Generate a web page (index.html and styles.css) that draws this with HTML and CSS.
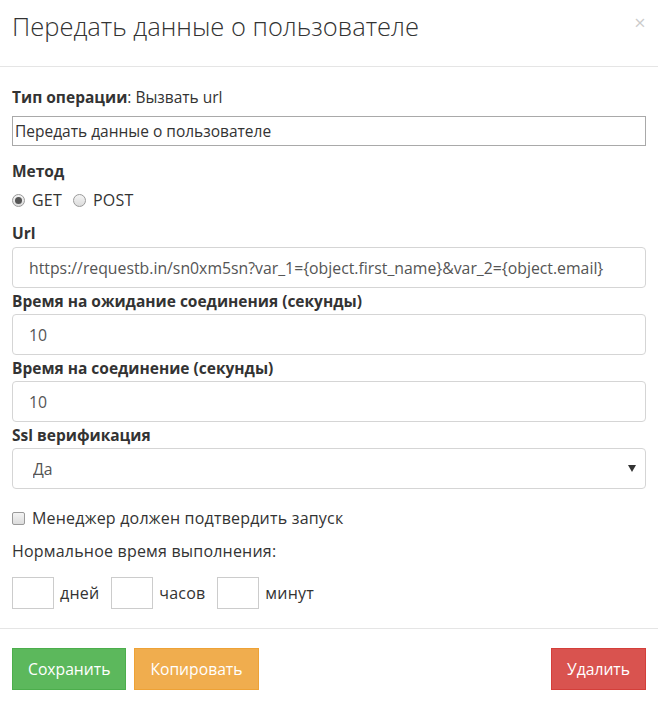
FILE: index.html
```html
<!DOCTYPE html>
<html lang="ru">

<head>
  <meta charset="UTF-8">
  <meta name="viewport" content="width=device-width, initial-scale=1.0">
  <title>Передать данные о пользователе</title>
  <link rel="stylesheet" href="styles.css">
</head>

<body>
  <div class="modal">
    <div class="modal-header">
      <h4 class="modal-title">Передать данные о пользователе</h4>
      <span class="close">&times;</span>
    </div>

    <div class="modal-body">
      <div class="op-type"><b>Тип операции</b>: Вызвать url</div>
      <input type="text" class="plain-input" value="Передать данные о пользователе">

      <div class="label label-method">Метод</div>
      <div class="radios">
        <label><input type="radio" name="method" checked> GET</label>
        <label><input type="radio" name="method"> POST</label>
      </div>

      <div class="label label-url">Url</div>
      <input type="text" class="form-control" value="https://requestb.in/sn0xm5sn?var_1={object.first_name}&var_2={object.email}">

      <div class="label">Время на ожидание соединения (секунды)</div>
      <input type="text" class="form-control" value="10">

      <div class="label">Время на соединение (секунды)</div>
      <input type="text" class="form-control" value="10">

      <div class="label">Ssl верификация</div>
      <div class="select-wrap">
        <select class="form-control">
          <option>Да</option>
          <option>Нет</option>
        </select>
      </div>

      <label class="check"><input type="checkbox"> Менеджер должен подтвердить запуск</label>

      <div class="normal-time">Нормальное время выполнения:</div>
      <div class="duration">
        <input type="text" class="small-input"><span>дней</span>
        <input type="text" class="small-input"><span>часов</span>
        <input type="text" class="small-input"><span>минут</span>
      </div>
    </div>

    <div class="modal-footer">
      <div class="btn btn-success">Сохранить</div>
      <div class="btn btn-warning">Копировать</div>
      <div class="btn btn-danger btn-right">Удалить</div>
    </div>
  </div>
</body>

</html>
```

FILE: styles.css
```css
* {
  margin: 0;
  padding: 0;
  box-sizing: border-box;
}

body {
  font-family: "Open Sans", sans-serif;
  font-size: 16px;
  letter-spacing: 0.2px;
  color: #333;
  background: #fff;
}

.modal {
  width: 658px;
}

.modal-header {
  height: 67px;
  padding: 8px 12px 0;
  border-bottom: 1px solid #e5e5e5;
  display: flex;
  justify-content: space-between;
  align-items: flex-start;
}

.modal-title {
  font-size: 25.5px;
  font-weight: 300;
  line-height: 36px;
  letter-spacing: 0;
  color: #333;
}

.close {
  font-size: 20px;
  line-height: 20px;
  color: #000;
  opacity: 0.2;
  margin-top: 5px;
}

.modal-body {
  padding: 20px 12px 0;
}

.op-type {
  font-size: 15.5px;
  letter-spacing: 0;
  line-height: 20px;
  margin-bottom: 9px;
}

.plain-input {
  display: block;
  width: 100%;
  height: 30px;
  border: 1px solid #a9a9a9;
  padding: 0 2px;
  font: inherit;
  font-size: 15.5px;
  color: #333;
}

.label {
  font-size: 15.5px;
  letter-spacing: 0;
  font-weight: bold;
  line-height: 20px;
  margin: 3px 0 3px;
}

.label-method {
  margin-top: 15px;
  margin-bottom: 9px;
}

.label-url {
  margin-top: 13px;
  margin-bottom: 4px;
}

.radios {
  display: flex;
  gap: 11px;
  line-height: 20px;
}

.radios label {
  display: flex;
  align-items: center;
  gap: 7px;
}

input[type="radio"] {
  appearance: none;
  width: 13px;
  height: 13px;
  border-radius: 50%;
  border: 1px solid #9a9a9a;
  background: linear-gradient(#f4f4f4, #dcdcdc);
  position: relative;
}

input[type="radio"]:checked::after {
  content: "";
  position: absolute;
  left: 2px;
  top: 2px;
  width: 7px;
  height: 7px;
  border-radius: 50%;
  background: #555;
}

.form-control {
  display: block;
  width: 100%;
  height: 41px;
  border: 1px solid #d5d5d5;
  border-radius: 4px;
  padding: 0 16px;
  font: inherit;
  font-size: 15.8px;
  letter-spacing: 0;
  color: #555;
  background: #fff;
}

.select-wrap {
  position: relative;
}

.select-wrap select {
  appearance: none;
  padding-left: 20px;
}

.select-wrap::after {
  content: "";
  position: absolute;
  right: 10px;
  top: 17px;
  border-left: 4px solid transparent;
  border-right: 4px solid transparent;
  border-top: 7px solid #333;
}

.check {
  display: flex;
  align-items: center;
  gap: 7px;
  margin-top: 19px;
  line-height: 20px;
}

input[type="checkbox"] {
  appearance: none;
  width: 13px;
  height: 13px;
  border: 1px solid #9a9a9a;
  border-radius: 2px;
  background: linear-gradient(#f4f4f4, #dcdcdc);
}

.normal-time {
  margin-top: 13px;
  line-height: 20px;
}

.duration {
  display: flex;
  align-items: center;
  margin-top: 16px;
}

.small-input {
  width: 42px;
  height: 32px;
  border: 1px solid #ccc;
  margin-right: 6px;
}

.duration span {
  margin-right: 12px;
}

.modal-footer {
  margin-top: 19px;
  border-top: 1px solid #e5e5e5;
  padding: 19px 12px;
  display: flex;
  gap: 8px;
}

.btn {
  height: 42px;
  line-height: 40px;
  padding: 0 15px;
  font-size: 15.7px;
  letter-spacing: 0;
  color: #fff;
  border: 1px solid transparent;
}

.btn-success {
  background: #5cb85c;
  border-color: #4cae4c;
}

.btn-warning {
  background: #f0ad4e;
  border-color: #eea236;
}

.btn-danger {
  background: #d9534f;
  border-color: #d43f3a;
}

.btn-right {
  margin-left: auto;
}
```
